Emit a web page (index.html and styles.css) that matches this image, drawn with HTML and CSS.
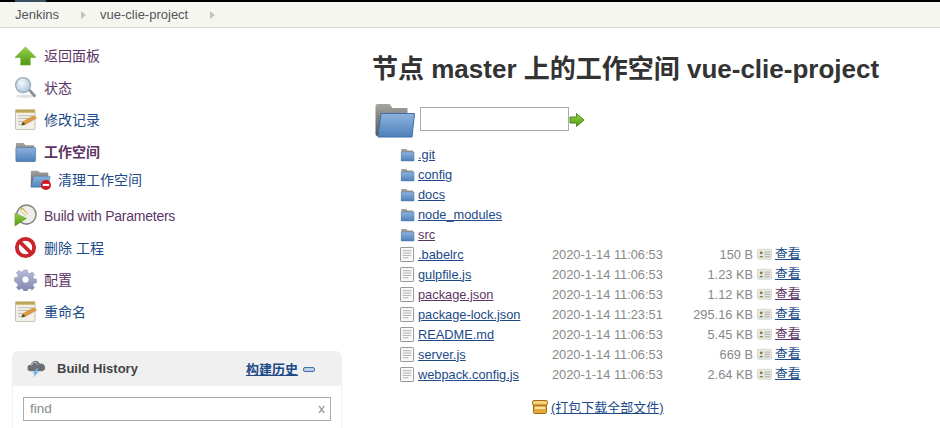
FILE: index.html
```html
<!DOCTYPE html>
<html lang="zh">
<head>
<meta charset="utf-8">
<title>vue-clie-project workspace</title>
<link rel="stylesheet" href="styles.css">
</head>
<body>
<svg class="defs" aria-hidden="true">
  <defs>
    <linearGradient id="gBlue" x1="0" y1="0" x2="0" y2="1"><stop offset="0" stop-color="#8db3dd"/><stop offset="1" stop-color="#4f80ba"/></linearGradient>
    <linearGradient id="gGrey" x1="0" y1="0" x2="0" y2="1"><stop offset="0" stop-color="#a5a5a0"/><stop offset="1" stop-color="#55565a"/></linearGradient>
    <linearGradient id="gGreen" x1="0" y1="0" x2="0" y2="1"><stop offset="0" stop-color="#9ad04a"/><stop offset="1" stop-color="#4c9a12"/></linearGradient>
    <linearGradient id="gGear" x1="0" y1="0" x2="0" y2="1"><stop offset="0" stop-color="#b9bcdc"/><stop offset="1" stop-color="#7f83ad"/></linearGradient>
    <radialGradient id="gLens" cx=".4" cy=".35" r=".7"><stop offset="0" stop-color="#f4f8fc"/><stop offset="1" stop-color="#a9c4de"/></radialGradient>
    <symbol id="folder" viewBox="0 0 24 24">
      <path d="M2 3h8l2 2.500h9v17H2z" fill="url(#gGrey)"/>
      <path d="M2 8h20.500v13.500a1 1 0 0 1-1 1H3a1 1 0 0 1-1-1z" fill="url(#gBlue)" stroke="#4d79ad" stroke-width=".7"/>
    </symbol>
    <symbol id="folderOpen" viewBox="0 0 41 38">
      <path d="M1 5a2 2 0 0 1 2-2h12l3 4h15v7H8L4 35H3a2 2 0 0 1-2-2z" fill="url(#gGrey)"/>
      <path d="M3 35h3l3-22h31.500l-4 22.500H4z" fill="#6c6c6c" opacity=".25"/>
      <path d="M6.500 12.500h33.500l-2.500 23.500H3.500z" fill="url(#gBlue)" stroke="#3f6fa8" stroke-width="1"/>
    </symbol>
    <symbol id="arrowUp" viewBox="0 0 24 24">
      <path d="M12 3 23 14h-6v8H7v-8H1z" fill="url(#gGreen)" stroke="#6ea82e" stroke-width=".6"/>
    </symbol>
    <symbol id="magnifier" viewBox="0 0 24 24">
      <ellipse cx="11" cy="21" rx="9" ry="2" fill="#e4e4e4"/>
      <path d="m14.500 15 2-2 6 6.500a1.400 1.400 0 0 1-2.300 2.200z" fill="#8b8f96"/>
      <circle cx="9.500" cy="9.500" r="7.800" fill="url(#gLens)" stroke="#9eadbd" stroke-width="1.500"/>
    </symbol>
    <symbol id="notepad" viewBox="0 0 24 24">
      <rect x="1.500" y="2" width="20.500" height="20.500" rx="1.500" fill="#f1efe6" stroke="#b5b3a8" stroke-width=".8"/>
      <rect x="1.500" y="1.500" width="20.500" height="3.500" fill="#c8b563"/>
      <path d="M3 3.200h17" stroke="#8f7f37" stroke-width="1" stroke-dasharray="1 1"/>
      <path d="M4 8h15M4 11h12M4 14h8M4 17h6" stroke="#bdbdb4" stroke-width="1"/>
      <path d="m8 18 1.200-3.500L20.500 8l3 2.500-11.500 6.500z" fill="#e39a3b" stroke="#a36b25" stroke-width=".5"/>
      <path d="m8 18 1.200-3.500 2.800 2.500z" fill="#4b4037"/>
    </symbol>
    <symbol id="wipe" viewBox="0 0 24 24">
      <path d="M2 4a1 1 0 0 1 1-1h7l2 2h9v5H6L3 20H2z" fill="url(#gGrey)"/>
      <path d="M5 9h18l-2 12H2z" fill="url(#gBlue)" stroke="#4d79ad" stroke-width=".6"/>
      <circle cx="18.500" cy="18.500" r="5.500" fill="#d3121c"/>
      <rect x="15" y="17.300" width="7" height="2.400" fill="#fff"/>
    </symbol>
    <symbol id="clock" viewBox="0 0 24 24">
      <circle cx="13" cy="11" r="10" fill="#ededea" stroke="#85857f" stroke-width="1.600"/>
      <path d="M13 11 7.500 4.500" stroke="#c9b54e" stroke-width="3.500"/>
      <path d="M13 11 8 6" stroke="#fff" stroke-width="1.500"/>
      <path d="M1 9.500 13 15 1 23z" fill="url(#gGreen)" stroke="#5b9c1f" stroke-width=".5"/>
    </symbol>
    <symbol id="noEntry" viewBox="0 0 24 24">
      <circle cx="12" cy="12" r="9" fill="#fff" stroke="#c9242a" stroke-width="4"/>
      <path d="M6 6l12 12" stroke="#c9242a" stroke-width="4"/>
    </symbol>
    <symbol id="gear" viewBox="0 0 24 24">
      <path d="M10 1h4l.700 3.300 2.200.900 2.800-1.900 2.800 2.800-1.900 2.800.9 2.200 3.300.7v4l-3.300.7-.9 2.200 1.900 2.800-2.800 2.800-2.800-1.900-2.200.9-.7 3.300h-4l-.7-3.300-2.200-.9-2.800 1.900-2.800-2.800 1.900-2.800-.9-2.200L-.8 14v-4l3.300-.7.900-2.200L1.500 4.300l2.800-2.800 2.800 1.900 2.200-.9z" transform="translate(1.200 1.200) scale(.9)" fill="url(#gGear)" stroke="#8d90b5" stroke-width=".6"/>
      <circle cx="12" cy="12" r="3.800" fill="#fff" stroke="#7b7ea6" stroke-width=".7"/>
    </symbol>
    <symbol id="file" viewBox="0 0 16 16">
      <rect x=".5" y=".5" width="14" height="15" rx=".8" fill="#f8f8f6" stroke="#8f8f8f"/>
      <path d="M3 4h9M3 6.500h9M3 9h9M3 11.500h6" stroke="#adadad" stroke-width="1"/>
    </symbol>
    <symbol id="card" viewBox="0 0 16 12">
      <rect x=".5" y="1" width="15" height="10.500" rx="1" fill="#e9e9e4" stroke="#d6d6d0"/>
      <circle cx="4.500" cy="4.800" r="1.500" fill="#8d7430"/>
      <path d="M2.500 9.500c0-2 4-2 4 0z" fill="#5f7d31"/>
      <path d="M8 4h6M8 6.500h6M8 9h6" stroke="#a8a8a2" stroke-width="1"/>
    </symbol>
    <symbol id="go" viewBox="0 0 16 16">
      <path d="M1 5h6.500V1.500L15 8l-7.500 6.500V11H1z" fill="url(#gGreen)" stroke="#4e8a1c" stroke-width="1"/>
    </symbol>
    <symbol id="box" viewBox="0 0 16 14">
      <path d="M1.500 5h13v7.500a1 1 0 0 1-1 1h-11a1 1 0 0 1-1-1z" fill="#e3a93c" stroke="#a26d17"/>
      <rect x=".5" y=".5" width="15" height="4.500" rx="1.500" fill="#f3d37a" stroke="#a26d17"/>
      <rect x="3" y="7" width="10" height="2" fill="#f8e3a6"/>
    </symbol>
    <symbol id="cloud" viewBox="0 0 20 20">
      <path d="M4 13a3.500 3.500 0 0 1 0-7 5 5 0 0 1 9.500-1A4 4 0 0 1 16 13z" fill="#6b6e74"/>
      <path d="M5 7a3 3 0 0 1 6-1" stroke="#c9ccd1" fill="none"/>
      <path d="M10 10 6 15.500h2.500L6 20l6-6H9.500L12 10z" fill="#66b6ea"/>
    </symbol>
  </defs>
</svg>

<div class="topstrip"><span class="logo-cut"></span></div>
<nav class="breadcrumbs">
  <a class="crumb crumb-root">Jenkins</a>
  <span class="crumb-arrow"></span>
  <a class="crumb">vue-clie-project</a>
  <span class="crumb-arrow"></span>
</nav>

<div class="page">
  <aside class="side">
    <ul class="tasks">
      <li class="task"><svg class="ticon"><use href="#arrowUp"/></svg><a class="visited">返回面板</a></li>
      <li class="task"><svg class="ticon"><use href="#magnifier"/></svg><a class="visited">状态</a></li>
      <li class="task"><svg class="ticon"><use href="#notepad"/></svg><a>修改记录</a></li>
      <li class="task"><svg class="ticon"><use href="#folder"/></svg><a class="visited current">工作空间</a></li>
      <li class="task sub"><svg class="ticon"><use href="#wipe"/></svg><a>清理工作空间</a></li>
      <li class="task after-sub"><svg class="ticon"><use href="#clock"/></svg><a class="visited latin">Build with Parameters</a></li>
      <li class="task"><svg class="ticon"><use href="#noEntry"/></svg><a>删除 工程</a></li>
      <li class="task"><svg class="ticon"><use href="#gear"/></svg><a class="visited">配置</a></li>
      <li class="task"><svg class="ticon"><use href="#notepad"/></svg><a>重命名</a></li>
    </ul>
    <section class="history">
      <header class="history-head">
        <svg class="cloud"><use href="#cloud"/></svg>
        <span class="history-title">Build History</span>
        <a class="history-link">构建历史</a>
        <span class="minus"></span>
      </header>
      <div class="history-body">
        <div class="find"><span class="find-text">find</span><span class="find-x">x</span></div>
      </div>
    </section>
  </aside>

  <main class="main">
    <h1 class="title">节点 master 上的工作空间 vue-clie-project</h1>
    <div class="pathbar">
      <svg class="bigfolder"><use href="#folderOpen"/></svg>
      <input class="pathinput" type="text" aria-label="path">
      <svg class="go"><use href="#go"/></svg>
    </div>
    <table class="files">
      <tbody>
        <tr><td class="c-name" colspan="4"><svg class="ficon"><use href="#folder"/></svg><a class="u">.git</a></td></tr>
        <tr><td class="c-name" colspan="4"><svg class="ficon"><use href="#folder"/></svg><a class="u">config</a></td></tr>
        <tr><td class="c-name" colspan="4"><svg class="ficon"><use href="#folder"/></svg><a class="u">docs</a></td></tr>
        <tr><td class="c-name" colspan="4"><svg class="ficon"><use href="#folder"/></svg><a class="u">node_modules</a></td></tr>
        <tr><td class="c-name" colspan="4"><svg class="ficon"><use href="#folder"/></svg><a class="u visited">src</a></td></tr>
        <tr><td class="c-name"><svg class="ficon"><use href="#file"/></svg><a class="u">.babelrc</a></td><td class="c-date">2020-1-14 11:06:53</td><td class="c-size">150 B</td><td class="c-view"><svg class="card"><use href="#card"/></svg><a class="u">查看</a></td></tr>
        <tr><td class="c-name"><svg class="ficon"><use href="#file"/></svg><a class="u">gulpfile.js</a></td><td class="c-date">2020-1-14 11:06:53</td><td class="c-size">1.23 KB</td><td class="c-view"><svg class="card"><use href="#card"/></svg><a class="u">查看</a></td></tr>
        <tr><td class="c-name"><svg class="ficon"><use href="#file"/></svg><a class="u visited">package.json</a></td><td class="c-date">2020-1-14 11:06:53</td><td class="c-size">1.12 KB</td><td class="c-view"><svg class="card"><use href="#card"/></svg><a class="u visited">查看</a></td></tr>
        <tr><td class="c-name"><svg class="ficon"><use href="#file"/></svg><a class="u">package-lock.json</a></td><td class="c-date">2020-1-14 11:23:51</td><td class="c-size">295.16 KB</td><td class="c-view"><svg class="card"><use href="#card"/></svg><a class="u">查看</a></td></tr>
        <tr><td class="c-name"><svg class="ficon"><use href="#file"/></svg><a class="u">README.md</a></td><td class="c-date">2020-1-14 11:06:53</td><td class="c-size">5.45 KB</td><td class="c-view"><svg class="card"><use href="#card"/></svg><a class="u visited">查看</a></td></tr>
        <tr><td class="c-name"><svg class="ficon"><use href="#file"/></svg><a class="u">server.js</a></td><td class="c-date">2020-1-14 11:06:53</td><td class="c-size">669 B</td><td class="c-view"><svg class="card"><use href="#card"/></svg><a class="u">查看</a></td></tr>
        <tr><td class="c-name"><svg class="ficon"><use href="#file"/></svg><a class="u">webpack.config.js</a></td><td class="c-date">2020-1-14 11:06:53</td><td class="c-size">2.64 KB</td><td class="c-view"><svg class="card"><use href="#card"/></svg><a class="u">查看</a></td></tr>
      </tbody>
    </table>
    <div class="download"><svg class="boxicon"><use href="#box"/></svg><a class="u">(打包下载全部文件)</a></div>
  </main>
</div>
</body>
</html>
```
FILE: styles.css
```css
* { box-sizing: border-box; }
html, body { margin: 0; padding: 0; }
body {
  width: 940px;
  height: 428px;
  overflow: hidden;
  background: #fff;
  color: #333;
  font-family: "Liberation Sans", "Noto Sans CJK SC", sans-serif;
  font-size: 13px;
}
a { color: #204a87; }
a.visited { color: #5c3566; }
a.u { text-decoration: underline; }

.defs { display: block; width: 0; height: 0; overflow: hidden; }

.topstrip { display: flex; height: 2px; padding-left: 15px; background: #000; }
.logo-cut { width: 31px; height: 2px; background: #3b4f63; }

.breadcrumbs {
  display: flex;
  align-items: center;
  height: 26px;
  padding-left: 15px;
  background: #f6f6f1;
  border-bottom: 1px solid #d8d8d4;
  font-size: 13px;
}
.crumb { color: #555; }
.crumb-arrow {
  width: 0;
  height: 0;
  margin: 1px 14px 0 22px;
  border-left: 5px solid #c4c4bf;
  border-top: 4px solid transparent;
  border-bottom: 4px solid transparent;
}
.crumb-arrow:last-child { margin-left: 22px; }

.page { display: flex; }

.side { flex: none; width: 372px; padding: 11px 0 0 12px; }
.tasks { list-style: none; margin: 0; padding: 0; width: 330px; }
.task {
  display: flex;
  align-items: center;
  height: 32px;
  padding-left: 2px;
  font-size: 14px;
}
.task a { margin-left: 7px; }
.task a.latin { letter-spacing: -0.240px; }
.ticon { flex: none; width: 23px; height: 23px; }
.current { font-weight: bold; }
.sub { height: 24px; padding-left: 16px; }
.sub a { margin-left: 6px; }
.sub .ticon { width: 24px; height: 22px; }
.after-sub { height: 31px; margin-top: 9px; }

.history {
  margin-top: 24px;
  width: 330px;
  height: 90px;
  border-radius: 6px 6px 0 0;
  background: #f0f0f0;
}
.history-head {
  display: flex;
  align-items: center;
  height: 35px;
  padding-left: 15px;
}
.cloud { flex: none; width: 19px; height: 19px; }
.history-title { margin-left: 11px; font-size: 13px; font-weight: bold; color: #444; }
.history-link { margin-left: 108px; font-size: 13px; font-weight: bold; text-decoration: underline; }
.minus {
  width: 12px;
  height: 5px;
  margin-left: 5px;
  margin-top: 2px;
  background: #bcd0e8;
  border: 1px solid #3f70ad;
  border-radius: 2px;
}
.history-body {
  height: 55px;
  padding: 11px 10px 0;
  background: #fff;
  border: 1px solid #f0f0f0;
  border-top: 0;
}
.find {
  display: flex;
  align-items: center;
  justify-content: space-between;
  height: 24px;
  padding: 0 5px 2px 6px;
  border: 1px solid #aaa;
  color: #8a8a8a;
  font-size: 13.500px;
}

.main { flex: 1; min-width: 0; }
.title {
  margin: 23px 0 0;
  font-size: 26px;
  line-height: 36px;
  font-weight: bold;
  color: #333;
  white-space: nowrap;
}
.pathbar {
  display: flex;
  align-items: center;
  height: 40px;
  margin: 13px 0 0 2px;
}
.bigfolder { flex: none; width: 42px; height: 38px; }
.pathinput {
  flex: none;
  width: 149px;
  height: 24px;
  margin: 0 0 2px 4px;
  padding: 0;
  border: 1px solid #aaa;
  background: #fff;
}
.go { flex: none; width: 16px; height: 16px; }

.files {
  margin: 4px 0 0 28px;
  border-collapse: collapse;
  font-size: 12.800px;
}
.files td { height: 20px; padding: 0; white-space: nowrap; }
.c-name { width: 152px; }
.c-name a { margin-left: 3px; }
.ficon { width: 15px; height: 15px; vertical-align: -3px; }
.c-date { width: 141px; color: #888; }
.c-size { width: 60px; color: #888; text-align: right; }
.c-view { width: 48px; line-height: 1; }
.c-view a { vertical-align: 1px; }
.files .c-view { padding: 2px 0 0 1px; }
.card { width: 15px; height: 12px; margin: 0 3px 0 3px; vertical-align: -1px; }

.download { margin: 13px 0 0 160px; font-size: 13px; }
.boxicon { width: 16px; height: 14px; margin-right: 3px; vertical-align: -2px; }
```
